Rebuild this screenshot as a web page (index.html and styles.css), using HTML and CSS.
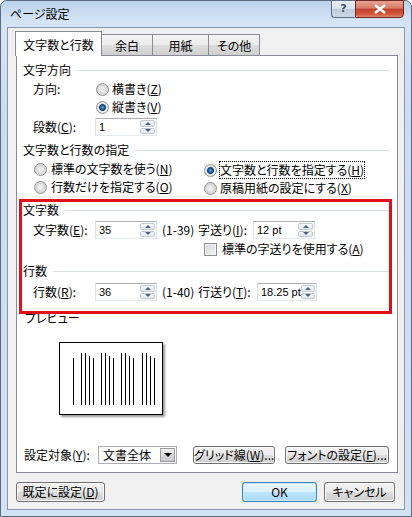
FILE: index.html
```html
<!DOCTYPE html>
<html lang="ja">
<head>
  <meta charset="UTF-8" />
  <title>ページ設定</title>
  <link rel="stylesheet" href="styles.css">
</head>
<body>
<div class="window">
  <div class="titlebar">
    <span class="title">ページ設定</span>
    <div class="caption">
      <div class="cap help">?</div>
      <div class="cap close">
        <svg width="14" height="10" viewBox="0 0 14 10"><path d="M2 1L12 9M12 1L2 9" stroke="#fff" stroke-width="2.4"/></svg>
      </div>
    </div>
  </div>
  <div class="client">
    <div class="tabs">
      <div class="tab active">文字数と行数</div>
      <div class="tab t-margin">余白</div>
      <div class="tab t-paper">用紙</div>
      <div class="tab t-other">その他</div>
    </div>
    <div class="panel">
      <div class="group">文字方向</div>
      <div class="row indent r-dir">
        <span class="lbl">方向:</span>
        <span class="radio"><i class="dot"></i>横書き(<u>Z</u>)</span>
      </div>
      <div class="row indent">
        <span class="lbl"></span>
        <span class="radio"><i class="dot on"></i>縦書き(<u>V</u>)</span>
      </div>
      <div class="row indent r-cols">
        <span class="lbl">段数(<u>C</u>):</span>
        <span class="spin"><span class="val">1</span><span class="arrows"><b class="up"></b><b class="down"></b></span></span>
      </div>

      <div class="group g-spec">文字数と行数の指定</div>
      <div class="row indent r-spec">
        <span class="col"><span class="radio r-left"><i class="dot"></i>標準の文字数を使う(<u>N</u>)</span></span>
        <span class="radio"><i class="dot on"></i><span class="focus">文字数と行数を指定する(<u>H</u>)</span></span>
      </div>
      <div class="row indent">
        <span class="col"><span class="radio r-left"><i class="dot"></i>行数だけを指定する(<u>O</u>)</span></span>
        <span class="radio"><i class="dot"></i>原稿用紙の設定にする(<u>X</u>)</span>
      </div>

      <div class="group g-chars">文字数</div>
      <div class="row indent r-chars">
        <span class="lbl">文字数(<u>E</u>):</span>
        <span class="spin"><span class="val">35</span><span class="arrows"><b class="up"></b><b class="down"></b></span></span>
        <span class="range">(1-39)</span>
        <span class="lbl2">字送り(<u>I</u>):</span>
        <span class="spin"><span class="val">12 pt</span><span class="arrows"><b class="up"></b><b class="down"></b></span></span>
      </div>
      <div class="row indent r-check">
        <span class="col"></span>
        <span class="check"><i class="box"></i>標準の字送りを使用する(<u>A</u>)</span>
      </div>

      <div class="group g-lines">行数</div>
      <div class="row indent r-lines">
        <span class="lbl">行数(<u>R</u>):</span>
        <span class="spin"><span class="val">36</span><span class="arrows"><b class="up"></b><b class="down"></b></span></span>
        <span class="range">(1-40)</span>
        <span class="lbl2 wide">行送り(<u>T</u>):</span>
        <span class="spin narrow"><span class="val">18.25 pt</span><span class="arrows"><b class="up"></b><b class="down"></b></span></span>
      </div>

      <div class="group g-preview plain">プレビュー</div>
      <div class="preview">
        <svg width="102" height="71" viewBox="0 0 102 71">
          <path d="M13.5 15V62 M21.5 10V62 M25.5 10V62 M29.5 13V62 M33.5 15V62 M41.5 10V62 M45.5 10V62 M49.5 13V62 M53.5 15V62 M61.5 10V62 M65.5 10V62 M69.5 13V62 M73.5 15V62 M82.5 10V62 M86.5 10V62 M90.5 13V62 M94.5 15V62" stroke="#000" stroke-width="1"/>
        </svg>
      </div>

      <div class="row r-target">
        <span class="lbl3">設定対象(<u>Y</u>):</span>
        <span class="combo"><span class="val">文書全体</span><span class="drop"><b></b></span></span>
        <button class="btn b-grid">グリッド線(<u>W</u>)...</button>
        <button class="btn b-font">フォントの設定(<u>F</u>)...</button>
      </div>

      <div class="highlight"></div>
    </div>
    <div class="footer">
      <button class="btn b-default">既定に設定(<u>D</u>)</button>
      <button class="btn primary b-ok">OK</button>
      <button class="btn b-cancel">キャンセル</button>
    </div>
  </div>
</div>
</body>
</html>
```

FILE: styles.css
```css
* { box-sizing: border-box; margin: 0; padding: 0; }
html, body { width: 412px; height: 517px; overflow: hidden; }
body {
  font-family: "Noto Sans CJK JP", "Noto Sans", sans-serif;
  font-size: 12px; line-height: 16px; color: #000;
  font-feature-settings: "palt";
  background: #fff;
}
u { text-decoration: underline; text-underline-offset: 1px; }
button { font: inherit; color: inherit; }

.window {
  width: 412px; height: 517px;
  display: flex; flex-direction: column;
  padding: 0 6px 6px 6px;
  border: 1px solid #5a6b82;
  border-radius: 7px 7px 0 0;
  background: linear-gradient(180deg, #bcd3ec 0, #d6e5f5 22px, #cadcf0 120px, #d3e2f3 100%);
}
.titlebar {
  height: 26px;
  display: flex; justify-content: space-between; align-items: flex-start;
}
.title { padding: 5px 0 0 3px; }
.caption { display: flex; margin-right: 1px; margin-top: -1px; }
.cap { height: 18px; display: flex; align-items: center; justify-content: center; border: 1px solid #5f6f86; }
.help {
  width: 24px; border-right: none; border-radius: 0 0 0 4px;
  background: linear-gradient(180deg, #e6eef8 0, #d5e1ee 50%, #bccbdd 51%, #cdd9e8 100%);
  color: #3b4c63; font-family: "DejaVu Sans", sans-serif; font-size: 11px; font-weight: bold;
}
.close {
  width: 49px; border-color: #6e2a22; border-radius: 0 0 4px 0;
  background: linear-gradient(180deg, #e8a293 0, #d67b67 45%, #c2432c 50%, #d0533a 80%, #e1876a 100%);
}

.client {
  flex: 1;
  border: 1px solid #8796ad;
  background: #f0f0f0;
  padding: 3px 6px 0 8px;
  display: flex; flex-direction: column;
}
.tabs { display: flex; align-items: flex-end; height: 24px; margin-left: -1px; position: relative; z-index: 1; }
.tab {
  height: 21px; padding-top: 3px; text-align: center;
  border: 1px solid #898c95; border-bottom: none; border-left: none;
  background: linear-gradient(180deg, #f3f3f3 0, #ebebeb 50%, #dddddd 51%, #cfcfcf 100%);
}
.tab.active {
  width: 87px; height: 25px; padding-top: 5px; margin-bottom: -1px;
  border-left: 1px solid #898c95; background: #fff;
}
.t-margin { width: 51px; }
.t-paper { width: 56px; }
.t-other { width: 51px; }

.panel {
  position: relative;
  height: 418px;
  background: #fff;
  border: 1px solid #898c95;
  padding: 6px 8px 8px 6px;
  display: flex; flex-direction: column;
}
.group { display: flex; align-items: center; height: 16px; }
.group::after { content: ""; flex: 1; height: 1px; background: #dadfe3; margin-left: 6px; }
.group.plain::after { display: none; }
.g-spec { margin-top: 6px; }
.g-chars { margin-top: 5px; }
.g-lines { margin-top: 5px; }
.g-preview { margin-top: 9px; margin-left: 2px; }

.row { display: flex; align-items: center; height: 18px; }
.indent { padding-left: 10px; }
.r-dir { margin-top: 2px; }
.r-cols { margin-top: 2px; }
.r-spec { margin-top: 3px; }
.r-chars { margin-top: 3px; }
.r-check { margin-top: 1px; }
.r-lines { margin-top: 4px; }
.r-target { margin-top: auto; padding-left: 1px; }

.lbl { width: 62px; }
.lbl2 { width: 55px; }
.lbl2.wide { width: 59px; }
.lbl3 { width: 74px; }
.col { width: 170px; }
.range { width: 41px; padding-left: 5px; }

.radio, .check { display: inline-flex; align-items: center; }
.dot {
  width: 13px; height: 13px; border-radius: 50%;
  border: 1px solid #939393;
  background: radial-gradient(circle at 50% 50%, #f6f6f6 0, #e4e4e4 3px, #d2d2d2 5px, #eeeeee 6px);
  margin: 0 3px 0 1px;
}
.r-left .dot { margin-right: 4px; }
.dot.on {
  background: radial-gradient(circle at 50% 50%, #6eb4e6 0, #2c6aa6 1.5px, #173e6a 3px, #8ab3d8 3.6px, #f2f2f2 4.2px, #dcdcdc 6px);
}
.focus { outline: 1px dotted #000; outline-offset: 0; }
.box {
  width: 13px; height: 13px;
  border: 1px solid #8f8f8f;
  background: linear-gradient(135deg, #d6d6d6 0, #f4f4f4 100%);
  box-shadow: inset 0 0 0 1px #f4f4f4;
  margin: 0 5px 0 1px;
}

.spin {
  display: flex; align-items: center; width: 62px; height: 18px;
  border: 1px solid #abadb3; border-color: #abadb3 #dbdfe6 #e3e9ef #e2e3ea;
  background: #fff; padding: 1px;
}
.spin.narrow { width: 60px; }
.spin .val {
  flex: 1; padding-left: 2px;
  font-family: "Liberation Sans", "Noto Sans", sans-serif; font-size: 11px; line-height: 14px;
  white-space: nowrap;
}
.arrows { width: 15px; height: 100%; display: flex; flex-direction: column; gap: 1px; }
.arrows b {
  flex: 1; display: flex; align-items: center; justify-content: center;
  border: 1px solid #c2cad4; border-radius: 2px;
  background: linear-gradient(180deg, #f5f7fa 0, #e4e9ef 100%);
}
.arrows b::after { content: ""; width: 0; height: 0; border-left: 3px solid transparent; border-right: 3px solid transparent; }
.arrows .up::after { border-bottom: 3px solid #4a5f80; }
.arrows .down::after { border-top: 3px solid #4a5f80; }

.preview {
  width: 104px; height: 73px;
  margin: 16px 0 0 36px;
  border: 1px solid #000;
  box-shadow: 2px 2px 2px #9a9a9a;
  background: #fff;
}
.preview svg { display: block; }

.combo {
  display: flex; width: 79px; height: 18px;
  border: 1px solid #abadb3; background: #fff; padding: 1px;
}
.combo .val { flex: 1; padding-left: 3px; line-height: 14px; }
.drop {
  width: 15px; display: flex; align-items: center; justify-content: center;
  border: 1px solid #9b9b9b;
  background: linear-gradient(180deg, #efefef 0, #dcdcdc 50%, #c9c9c9 100%);
}
.drop b { width: 0; height: 0; border-left: 4px solid transparent; border-right: 4px solid transparent; border-top: 4px solid #000; }

.btn {
  height: 18px; line-height: 14px;
  border: 1px solid #707070; border-radius: 3px;
  background: linear-gradient(180deg, #f2f2f2 0, #ebebeb 50%, #dddddd 51%, #cfcfcf 100%);
  box-shadow: inset 0 0 0 1px #fbfbfb;
  white-space: nowrap;
}
.b-grid { width: 82px; margin-left: 16px; }
.b-font { width: 104px; margin-left: 10px; }

.footer { display: flex; margin-top: 9px; padding-right: 3px; }
.footer .btn { height: 20px; }
.b-default { width: 89px; }
.b-ok { width: 75px; margin-left: auto; }
.b-cancel { width: 71px; margin-left: 7px; }
.btn.primary {
  border-color: #3c7fb1;
  background: linear-gradient(180deg, #eaf6fd 0, #d9f0fc 50%, #bee6fd 51%, #a7d9f5 100%);
  box-shadow: inset 0 0 0 1px #c7eafc;
}

.highlight {
  position: absolute; left: 2px; top: 143px;
  width: 373px; height: 115px;
  border: 3px solid #e0101a;
  pointer-events: none;
}
```
